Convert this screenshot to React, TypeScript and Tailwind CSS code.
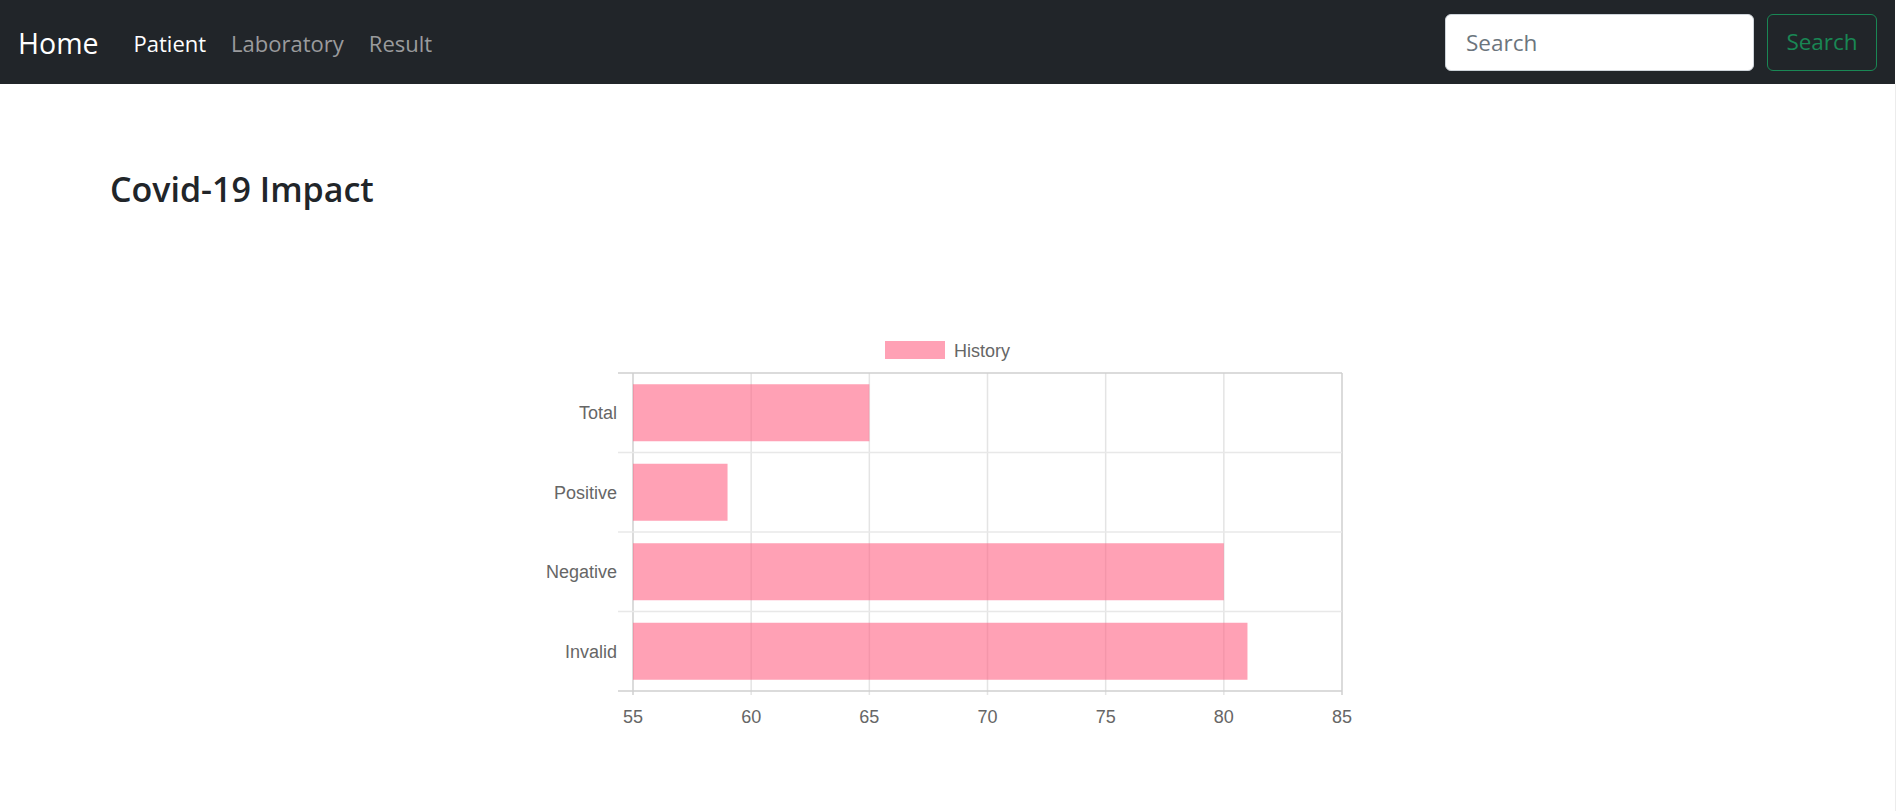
import React from "react";

const sans = "font-['Segoe_UI','Open_Sans',sans-serif]";

interface Row {
  label: string;
  value: number;
}

const rows: Row[] = [
  { label: "Total", value: 65 },
  { label: "Positive", value: 59 },
  { label: "Negative", value: 80 },
  { label: "Invalid", value: 81 },
];

const ticks = [55, 60, 65, 70, 75, 80, 85];

// plot box inside the svg
const X0 = 103;
const X1 = 812;
const Y0 = 42;
const ROW = 79.5;
const xFor = (v: number) => X0 + ((v - 55) * (X1 - X0)) / 30;

const Navbar = () => (
  <nav className={`flex h-[84px] items-center bg-[#212529] pl-[18px] pr-[18px] pt-[2px] ${sans}`}>
    <a className="text-[28.5px] leading-none text-white">Home</a>
    <ul className="ml-[35px] flex gap-[25px] text-[22px] leading-none">
      <li className="text-white">Patient</li>
      <li className="text-[#9a9b9d]">Laboratory</li>
      <li className="text-[#9a9b9d]">Result</li>
    </ul>
    <form className="-mt-[2px] ml-auto flex gap-[13px]">
      <input
        placeholder="Search"
        className="h-[57px] w-[309px] rounded-[6px] border border-[#ced4da] bg-white px-[20px] text-[22.5px] text-[#212529] outline-none placeholder:text-[#6c757d]"
      />
      <button
        type="button"
        className="h-[57px] w-[110px] rounded-[6px] border border-[#198754] text-[22.5px] text-[#198754]"
      >
        Search
      </button>
    </form>
  </nav>
);

const Chart = () => (
  <svg width={836} height={400} className="font-['Liberation_Sans',Arial,sans-serif]">
    {/* legend */}
    <rect x={355} y={10} width={60} height={18} fill="rgba(255,99,132,0.6)" />
    <text x={424} y={25.5} fontSize={18} fill="#666">
      History
    </text>

    {/* grid */}
    {ticks.map((t, i) => (
      <line
        key={t}
        x1={xFor(t)}
        x2={xFor(t)}
        y1={Y0}
        y2={Y0 + ROW * 4 + 4}
        stroke={i === 0 || i === ticks.length - 1 ? "#cfcfcf" : "#e4e4e4"}
        strokeWidth={1.5}
      />
    ))}
    {[0, 1, 2, 3, 4].map((i) => (
      <line
        key={i}
        x1={88}
        x2={X1}
        y1={Y0 + ROW * i}
        y2={Y0 + ROW * i}
        stroke={i === 0 || i === 4 ? "#cfcfcf" : "#e8e8e8"}
        strokeWidth={1.5}
      />
    ))}

    {/* bars */}
    {rows.map((r, i) => {
      const cy = Y0 + ROW * i + ROW / 2;
      return (
        <g key={r.label}>
          <rect
            x={X0}
            y={cy - 28.5}
            width={xFor(r.value) - X0}
            height={57}
            fill="rgba(255,99,132,0.6)"
          />
          <text x={87} y={cy + 6.5} fontSize={18} fill="#666" textAnchor="end">
            {r.label}
          </text>
        </g>
      );
    })}

    {/* x labels */}
    {ticks.map((t) => (
      <text key={t} x={xFor(t)} y={391.5} fontSize={18} fill="#666" textAnchor="middle">
        {t}
      </text>
    ))}
  </svg>
);

export default function App() {
  return (
    <div className="flex min-h-[811px] bg-white">
      <div className="flex-1">
        <Navbar />
        <main>
          <h3 className={`ml-[110px] mt-[82px] text-[34px] font-semibold leading-[47px] text-[#212529] ${sans}`}>
            Covid-19 Impact
          </h3>
          <div className="mt-[118px] flex justify-center">
            <Chart />
          </div>
        </main>
      </div>
      <div className="flex w-px flex-col">
        <div className="h-[84px] bg-white" />
        <div className="flex-1 bg-[#ececec]" />
      </div>
    </div>
  );
}
